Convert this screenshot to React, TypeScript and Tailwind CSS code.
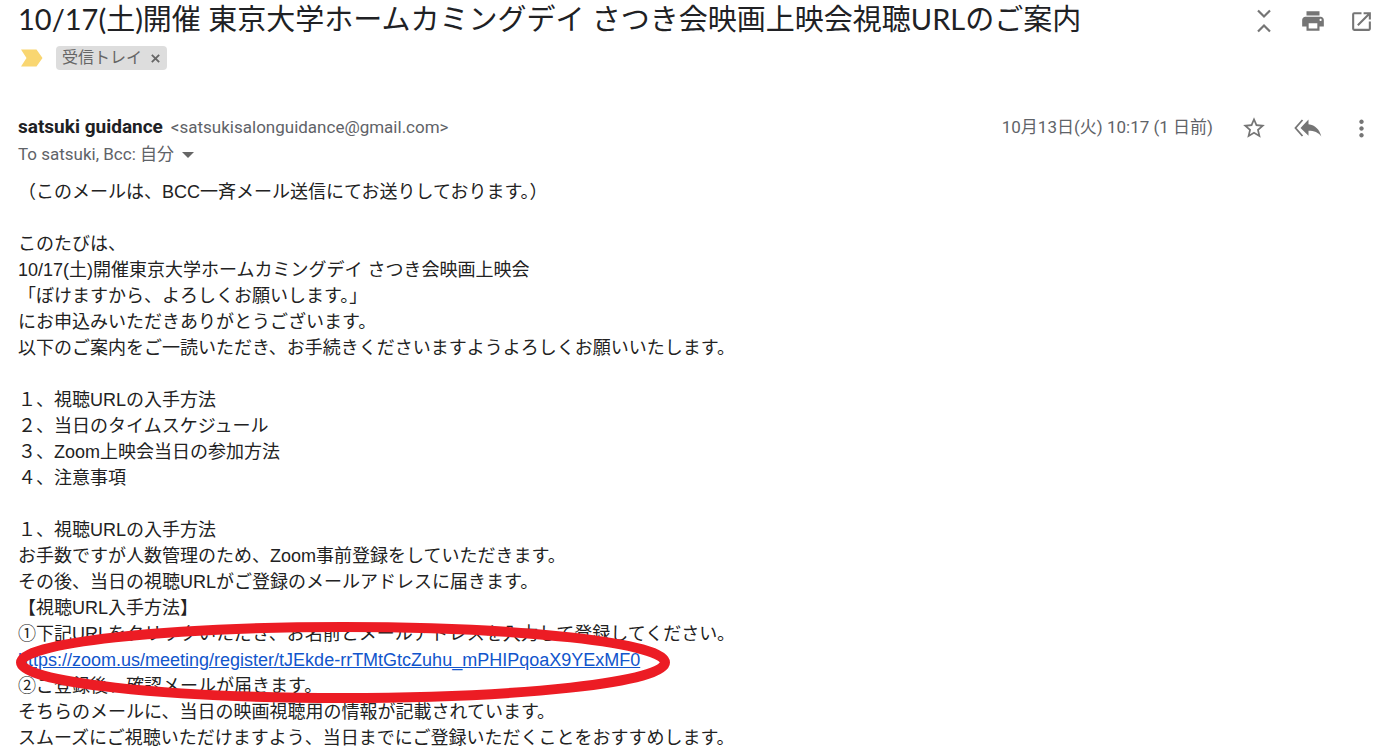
import React from "react";
import { MdPrint, MdOpenInNew, MdStarBorder, MdMoreVert } from "react-icons/md";

const REGISTER_URL =
  "https://zoom.us/meeting/register/tJEkde-rrTMtGtcZuhu_mPHIPqoaX9YExMF0";

const INTRO_LINES = [
  "（このメールは、BCC一斉メール送信にてお送りしております。）",
  "",
  "このたびは、",
  "10/17(土)開催東京大学ホームカミングデイ さつき会映画上映会",
  "「ぼけますから、よろしくお願いします。」",
  "にお申込みいただきありがとうございます。",
  "以下のご案内をご一読いただき、お手続きくださいますようよろしくお願いいたします。",
  "",
  "１、視聴URLの入手方法",
  "２、当日のタイムスケジュール",
  "３、Zoom上映会当日の参加方法",
  "４、注意事項",
  "",
  "１、視聴URLの入手方法",
  "お手数ですが人数管理のため、Zoom事前登録をしていただきます。",
  "その後、当日の視聴URLがご登録のメールアドレスに届きます。",
  "【視聴URL入手方法】",
  "①下記URLをクリックいただき、お名前とメールアドレスを入力して登録してください。",
];

const CLOSING_LINES = [
  "②ご登録後、確認メールが届きます。",
  "そちらのメールに、当日の映画視聴用の情報が記載されています。",
  "スムーズにご視聴いただけますよう、当日までにご登録いただくことをおすすめします。",
];

export default function App() {
  return (
    <main className="bg-white text-[#202124] pl-[18px] pr-[23px] font-[Roboto,'Noto_Sans_CJK_JP',sans-serif]">
      <header className="flex items-start justify-between">
        <div>
          <h1 className="text-[29px] leading-[38px] font-normal font-[Lato,'Noto_Sans_CJK_JP',sans-serif]">
            10/17(土)開催 東京大学ホームカミングデイ さつき会映画上映会視聴URLのご案内
          </h1>
          <div className="flex items-center mt-2 h-6">
            <ImportanceMarker />
            <span className="flex items-center h-6 ml-[13px] px-1.5 gap-2 rounded bg-[#dddddd] text-[#666666] text-base">
              受信トレイ
              <button aria-label="ラベルを削除">
                <svg width="11" height="11" viewBox="0 0 12 12" stroke="#666666" strokeWidth="2">
                  <path d="M2 2l8 8M10 2l-8 8" />
                </svg>
              </button>
            </span>
          </div>
        </div>

        <div className="flex items-center gap-6 h-[42px] text-[#757575]">
          <IconButton label="すべて折りたたむ">
            <CollapseIcon />
          </IconButton>
          <IconButton label="すべて印刷">
            <MdPrint size={26} />
          </IconButton>
          <IconButton label="新しいウィンドウで開く">
            <MdOpenInNew size={25} />
          </IconButton>
        </div>
      </header>

      <section className="flex items-start justify-between mt-11">
        <div>
          <div className="flex items-center h-[27px] gap-2">
            <h2 className="text-[19px] font-bold">satsuki guidance</h2>
            <span className="text-[17px] text-[#5f6368]">
              &lt;satsukisalonguidance@gmail.com&gt;
            </span>
          </div>
          <div className="flex items-center h-[27px] gap-2 text-[17px] text-[#5f6368]">
            <span>To satsuki, Bcc: 自分</span>
            <button aria-label="詳細を表示">
              <svg width="12" height="6" viewBox="0 0 12 6" fill="#666666">
                <path d="M0 0h12L6 6z" />
              </svg>
            </button>
          </div>
        </div>

        <div className="flex items-center h-7 text-[#757575]">
          <time className="text-[17px] text-[#5f6368] mr-7">
            10月13日(火) 10:17 (1 日前)
          </time>
          <div className="flex items-center gap-[29px]">
            <IconButton label="スター">
              <MdStarBorder size={26} />
            </IconButton>
            <IconButton label="全員に返信">
              <ReplyAllIcon />
            </IconButton>
            <IconButton label="その他">
              <MdMoreVert size={27} />
            </IconButton>
          </div>
        </div>
      </section>

      <article className="mt-[11px] text-[#222222] text-[18px] leading-[26px] font-['Liberation_Sans','Noto_Sans_CJK_JP',sans-serif]">
        {INTRO_LINES.map((line, i) => (
          <BodyLine key={i} text={line} />
        ))}
        <div className="relative h-[26px]">
          <a href={REGISTER_URL} className="text-[#1155cc] underline">
            {REGISTER_URL}
          </a>
          <Highlight />
        </div>
        {CLOSING_LINES.map((line, i) => (
          <BodyLine key={i} text={line} />
        ))}
      </article>
    </main>
  );
}

const BodyLine = ({ text }: { text: string }) => (
  <p className="h-[26px] whitespace-nowrap">{text}</p>
);

const IconButton = ({
  label,
  children,
}: {
  label: string;
  children: React.ReactNode;
}) => (
  <button
    aria-label={label}
    className="flex items-center justify-center w-[25px] h-7 shrink-0 cursor-pointer"
  >
    <span className="shrink-0">{children}</span>
  </button>
);

const ImportanceMarker = () => (
  <svg className="ml-[3px]" width="22" height="18" viewBox="0 0 22 18" fill="#f9d671">
    <path d="M0 .5h15.500L21.500 9l-6 8.500H0L5.500 9z" />
  </svg>
);

const CollapseIcon = () => (
  <svg width="16" height="24" viewBox="0 0 16 24" fill="none" stroke="currentColor" strokeWidth="2.2">
    <path d="M2 1.500l6 6 6-6M2 22.500l6-6 6 6" />
  </svg>
);

const ReplyAllIcon = () => (
  <svg width="28" height="18" viewBox="0 0 28 18">
    <path d="M8.500 1L1.500 9l7 8" fill="none" stroke="currentColor" strokeWidth="1.800" />
    <path
      d="M14.500 .5v4.700c7 1 11 5.300 12.800 12.300-3-4-7-5.700-12.800-5.700v5L6.500 9z"
      fill="currentColor"
    />
  </svg>
);

// red ring drawn around the registration link
const Highlight = () => (
  <svg
    className="absolute -left-0.5 -top-[25px] pointer-events-none"
    width="654"
    height="81"
    viewBox="0 0 654 81"
    fill="none"
  >
    <ellipse cx="327" cy="40.500" rx="322" ry="35.500" stroke="#ec1c24" strokeWidth="10" />
  </svg>
);
